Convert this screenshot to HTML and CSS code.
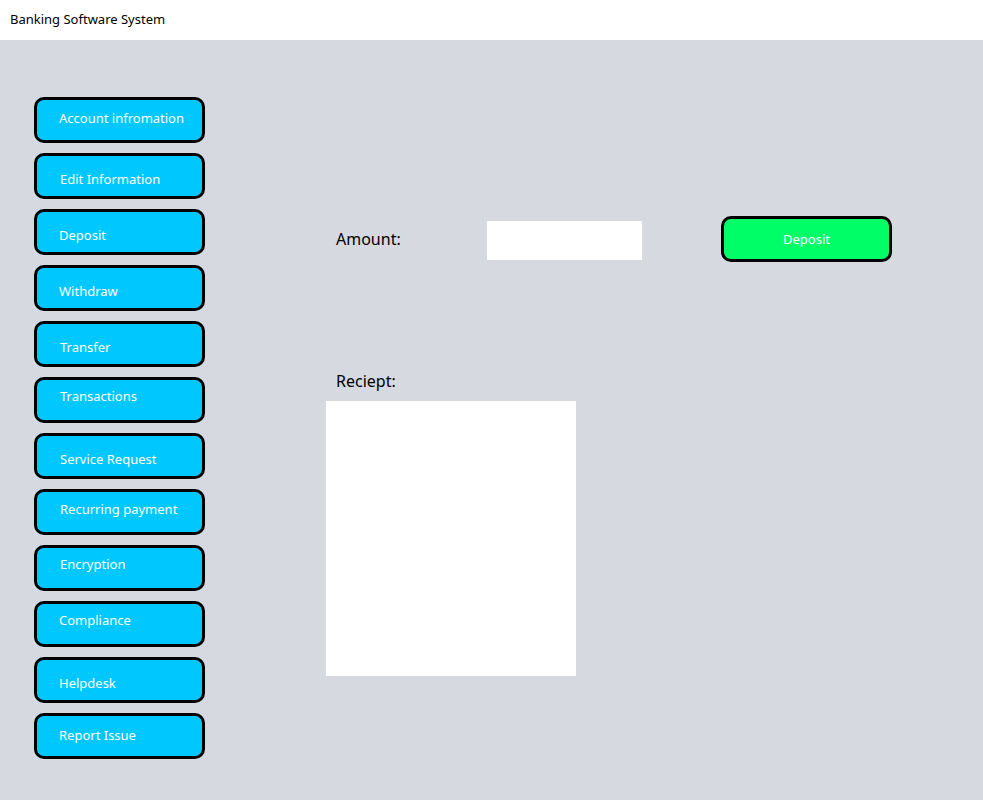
FILE: index.html
```html
<!DOCTYPE html>
<html>
<head>
<meta charset="utf-8">
<title>Banking Software System</title>
<link rel="stylesheet" href="styles.css">
</head>
<body>
<header class="topbar">Banking Software System</header>
<main class="main">
  <nav class="sidebar">
    <button class="nav-btn t20">Account infromation</button>
    <button class="nav-btn t25 x1">Edit Information</button>
    <button class="nav-btn t25">Deposit</button>
    <button class="nav-btn t25">Withdraw</button>
    <button class="nav-btn t25 x1">Transfer</button>
    <button class="nav-btn t18 x1">Transactions</button>
    <button class="nav-btn t25 x1">Service Request</button>
    <button class="nav-btn t19 x1">Recurring payment</button>
    <button class="nav-btn t18 x1">Encryption</button>
    <button class="nav-btn t18">Compliance</button>
    <button class="nav-btn t25">Helpdesk</button>
    <button class="nav-btn t21">Report Issue</button>
  </nav>
  <section class="content">
    <div class="amount-row">
      <span class="label amount-label">Amount:</span>
      <div class="amount-input"></div>
      <button class="deposit-btn">Deposit</button>
    </div>
    <div class="label receipt-label">Reciept:</div>
    <div class="receipt-box"></div>
  </section>
</main>
</body>
</html>
```
FILE: styles.css
```css
html, body {
  margin: 0;
  padding: 0;
  height: 100%;
}
body {
  font-family: "Noto Sans", "DejaVu Sans", sans-serif;
  background: #d6d9e0;
  color: #000;
}
.topbar {
  height: 40px;
  box-sizing: border-box;
  background: #fff;
  padding: 10px 0 0 10px;
  font-size: 13px;
  line-height: 18px;
}
.main {
  display: flex;
  align-items: flex-start;
}
.sidebar {
  display: flex;
  flex-direction: column;
  gap: 11px;
  padding: 57px 0 0 34px;
  width: 171px;
}
.nav-btn {
  box-sizing: border-box;
  width: 171px;
  height: 46px;
  border: 3px solid #000;
  border-radius: 10px;
  background: #00c8ff;
  color: #fff;
  font-family: inherit;
  font-size: 13px;
  line-height: 16px;
  text-align: left;
  padding: 0 0 0 22px;
  display: flex;
  align-items: flex-start;
}
.nav-btn + .nav-btn { margin-top: -1px; }
.nav-btn.x1 { padding-left: 23px; }
.t18 { padding-top: 8px; }
.t19 { padding-top: 9px; }
.t20 { padding-top: 10px; }
.t21 { padding-top: 11px; }
.t25 { padding-top: 15px; }
.content {
  margin-left: 121px;
  padding-top: 176px;
  display: flex;
  flex-direction: column;
}
.amount-row {
  display: flex;
  align-items: center;
  height: 46px;
}
.label {
  font-size: 16px;
  line-height: 19px;
}
.amount-label {
  margin-left: 10px;
  width: 151px;
}
.amount-input {
  width: 155px;
  height: 39px;
  background: #fff;
  margin-top: 3px;
}
.deposit-btn {
  box-sizing: border-box;
  margin-left: 79px;
  width: 171px;
  height: 46px;
  border: 3px solid #000;
  border-radius: 10px;
  background: #00ff66;
  color: #fff;
  font-family: inherit;
  font-size: 13px;
  padding: 0;
}
.receipt-label {
  margin: 110px 0 0 10px;
}
.receipt-box {
  margin-top: 10px;
  width: 250px;
  height: 275px;
  background: #fff;
}
```
